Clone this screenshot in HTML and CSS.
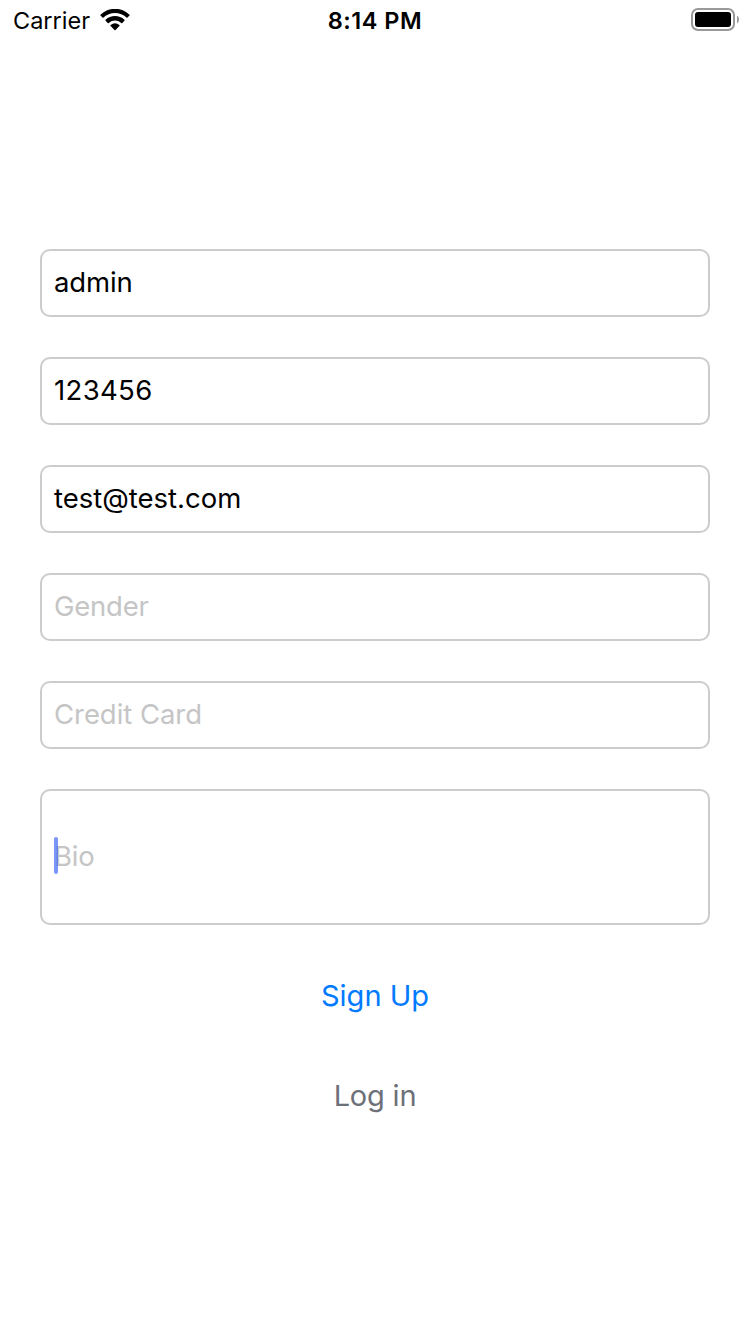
FILE: index.html
```
<!DOCTYPE html>
<html lang="en">
<head>
<meta charset="utf-8">
<title>Sign Up</title>
<link rel="stylesheet" href="styles.css">
</head>
<body>
<header class="status">
  <div class="status-left">
    <span class="carrier">Carrier</span>
    <svg class="wifi" width="30" height="22" viewBox="0 0 30 22">
      <path d="M0.5 5.8A20.5 20.5 0 0 1 29.5 5.8Q29.9 6.2 29.5 6.6L27.5 8.6Q27 9.1 26.5 8.6A16.6 16.6 0 0 0 3.5 8.6Q3 9.1 2.5 8.6L0.5 6.6Q0.1 6.2 0.5 5.8Z"/>
      <path d="M5.6 10.8A13.6 13.6 0 0 1 24.4 10.8Q24.9 11.3 24.4 11.8L22.3 13.9Q21.8 14.4 21.2 13.9A9.4 9.4 0 0 0 8.8 13.9Q8.2 14.4 7.7 13.9L5.6 11.8Q5.1 11.3 5.6 10.8Z"/>
      <path d="M10.6 16A7 7 0 0 1 19.4 16Q20 16.5 19.4 17.1L15.5 21Q15 21.5 14.5 21L10.6 17.1Q10 16.5 10.6 16Z"/>
    </svg>
  </div>
  <span class="time">8:14 PM</span>
  <div class="status-right">
    <svg class="battery" width="48" height="23" viewBox="0 0 48 23">
      <rect x="1" y="1" width="42" height="21" rx="6" fill="none" stroke="#999" stroke-width="2"/>
      <rect x="4" y="4" width="36" height="15" rx="3"/>
      <path d="M46 7.5Q48 8.7 48 11.5T46 15.5Z" fill="#999"/>
    </svg>
  </div>
</header>
<main class="form">
  <div class="field"><span class="value admin">admin</span></div>
  <div class="field"><span class="value digits">123456</span></div>
  <div class="field"><span class="value email">test@test.com</span></div>
  <div class="field"><span class="hint gender">Gender</span></div>
  <div class="field"><span class="hint card">Credit Card</span></div>
  <div class="field tall"><span class="hint bio">Bio</span><i class="caret"></i></div>
  <div class="actions">
    <span class="signup">Sign Up</span>
    <span class="login">Log in</span>
  </div>
</main>
</body>
</html>
```
FILE: styles.css
```
* { box-sizing: border-box; }
body {
  margin: 0;
  min-height: 1334px;
  background: #fff;
  color: #000;
  font-family: Inter, "Liberation Sans", sans-serif;
}
.status {
  height: 40px;
  display: grid;
  grid-template-columns: 1fr auto 1fr;
  align-items: center;
  padding: 0 11px 0 13px;
}
.status-left { display: flex; align-items: center; gap: 10px; }
.status-right { display: flex; justify-content: flex-end; }
.battery { margin-bottom: 2px; }
.carrier { font-size: 23.5px; line-height: 38px; padding-top: 2px; letter-spacing: 0; }
.time {
  font-size: 23.5px;
  line-height: 38px;
  padding-top: 2px;
  margin-left: -2px;
  font-weight: 600;
  letter-spacing: 0.5px;
}
.form {
  margin-top: 209px;
  padding: 0 40px;
  display: flex;
  flex-direction: column;
  gap: 40px;
}
.field {
  position: relative;
  height: 68px;
  border: 2px solid #ccc;
  border-radius: 10px;
  padding: 0 12px 2px;
  display: flex;
  align-items: center;
  font-size: 27.5px;
  line-height: 36px;
}
.tall { height: 136px; }
.admin { letter-spacing: -0.15px; }
.digits { letter-spacing: 0.35px; }
.email { letter-spacing: 0; }
.gender { letter-spacing: -0.25px; }
.card { letter-spacing: -0.05px; }
.bio { letter-spacing: -0.2px; }
.hint { color: #c5c5c6; }
.caret {
  position: absolute;
  left: 12px;
  top: 46px;
  width: 4px;
  height: 37px;
  border-radius: 2px;
  background: rgba(66, 107, 242, 0.7);
}
.actions {
  display: flex;
  flex-direction: column;
  align-items: center;
  gap: 60px;
  padding-top: 11px;
  font-size: 29px;
  line-height: 40px;
}
.signup { color: #007aff; }
.login { color: #6d7078; letter-spacing: -0.2px; }
```
